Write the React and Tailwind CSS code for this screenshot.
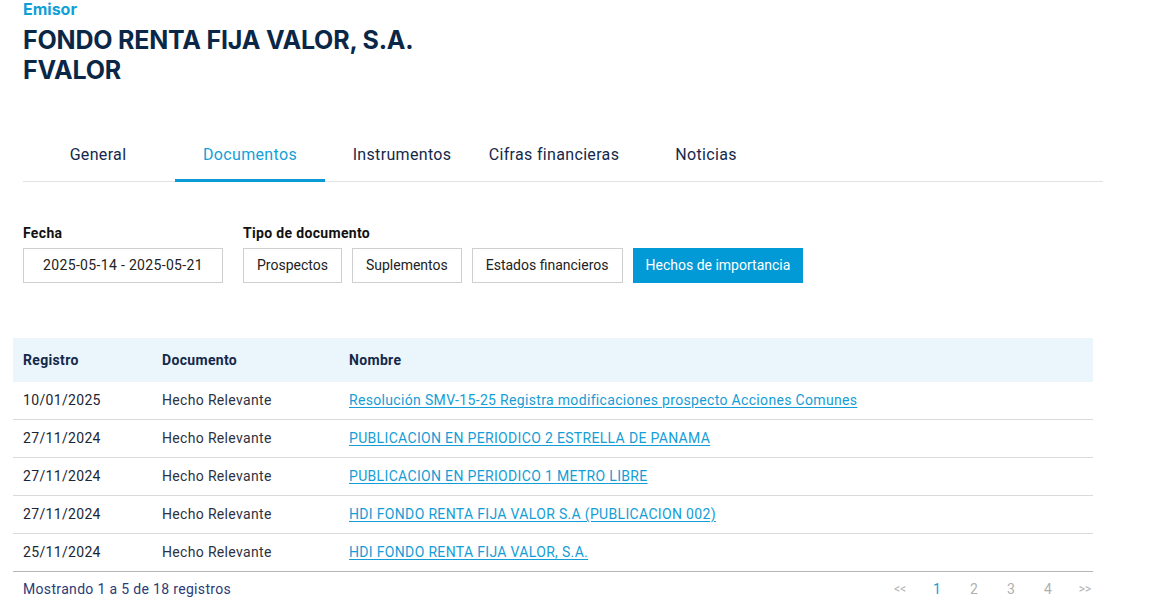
import React from "react";

const tabs = ["General", "Documentos", "Instrumentos", "Cifras financieras", "Noticias"];
const tipos = ["Prospectos", "Suplementos", "Estados financieros"];
const rows = [
  ["10/01/2025", "Hecho Relevante", "Resolución SMV-15-25 Registra modificaciones prospecto Acciones Comunes"],
  ["27/11/2024", "Hecho Relevante", "PUBLICACION EN PERIODICO 2 ESTRELLA DE PANAMA"],
  ["27/11/2024", "Hecho Relevante", "PUBLICACION EN PERIODICO 1 METRO LIBRE"],
  ["27/11/2024", "Hecho Relevante", "HDI FONDO RENTA FIJA VALOR S.A (PUBLICACION 002)"],
  ["25/11/2024", "Hecho Relevante", "HDI FONDO RENTA FIJA VALOR, S.A."],
];

export default function App() {
  return (
    <div className="w-[1150px] h-[615px] bg-white overflow-hidden text-[#222] tracking-[0.33px]" style={{ fontFamily: "Roboto, 'Liberation Sans', sans-serif" }}>
      <div className="pl-[23px] tracking-normal">
        <div className="text-[16px] font-bold text-[#129fd7] leading-[17px] pt-[1px]" style={{ fontFamily: "Inter, 'Noto Sans', sans-serif" }}>Emisor</div>
        <h1 className="mt-[7px] text-[25px] font-bold text-[#0b2747] leading-[30px] tracking-[-0.2px]" style={{ fontFamily: "Inter, 'Noto Sans', sans-serif" }}>
          FONDO RENTA FIJA VALOR, S.A.
          <br />
          FVALOR
        </h1>
      </div>

      <div className="mt-[45px] ml-[23px] w-[1080px] border-b border-[#e3e3e3] flex gap-[2px]">
        {tabs.map((t, i) => (
          <div
            key={t}
            className={
              "w-[150px] h-[52px] flex items-center justify-center text-[16px] -mb-px border-b-[3px] " +
              (i === 1 ? "text-[#139fd8] border-[#0a9ad6]" : "text-[#14294a] border-transparent")
            }
          >
            {t}
          </div>
        ))}
      </div>

      <div className="mt-[43px] ml-[23px] flex gap-[20px]">
        <div>
          <div className="text-[14px] font-bold text-[#111] leading-[16px]">Fecha</div>
          <div className="mt-[7px] w-[200px] h-[35px] border border-[#cfcfcf] flex items-center justify-center text-[14px] text-[#222]">
            2025-05-14 - 2025-05-21
          </div>
        </div>
        <div>
          <div className="text-[14px] font-bold text-[#111] leading-[16px]">Tipo de documento</div>
          <div className="mt-[7px] flex gap-[10px] tracking-normal">
            {tipos.map((t) => (
              <div key={t} className="h-[35px] px-[13px] border border-[#cfcfcf] flex items-center text-[14px] text-[#222]">
                {t}
              </div>
            ))}
            <div className="h-[35px] px-[13px] bg-[#0199d6] flex items-center text-[14px] text-white">
              Hechos de importancia
            </div>
          </div>
        </div>
      </div>

      <div className="mt-[55px] ml-[13px] w-[1080px]">
        <div className="h-[44px] bg-[#ebf5fc] flex items-center text-[14px] font-bold text-[#14294a]">
          <div className="w-[149px] pl-[10px]">Registro</div>
          <div className="w-[187px]">Documento</div>
          <div>Nombre</div>
        </div>
        {rows.map((r, i) => (
          <div
            key={i}
            className={
              "h-[38px] flex items-center text-[14px] border-b " +
              (i === rows.length - 1 ? "border-[#b5b5b5]" : "border-[#dadada]")
            }
          >
            <div className="w-[149px] pl-[10px] text-[#1c2533]">{r[0]}</div>
            <div className="w-[187px] text-[#2b3342]">{r[1]}</div>
            <div className="text-[#149dd6] underline underline-offset-2">{r[2]}</div>
          </div>
        ))}
        <div className="h-[34px] flex items-center justify-between text-[14px]">
          <div className="pl-[10px] text-[#2a3b78]">Mostrando 1 a 5 de 18 registros</div>
          <div className="flex items-center gap-[21px] text-[#b0b0b0] tracking-normal">
            <span className="w-[16px] text-center text-[12px]">&lt;&lt;</span>
            <span className="w-[16px] text-center text-[#129fd7]">1</span>
            <span className="w-[16px] text-center">2</span>
            <span className="w-[16px] text-center">3</span>
            <span className="w-[16px] text-center">4</span>
            <span className="w-[16px] text-center text-[12px]">&gt;&gt;</span>
          </div>
        </div>
      </div>
    </div>
  );
}
